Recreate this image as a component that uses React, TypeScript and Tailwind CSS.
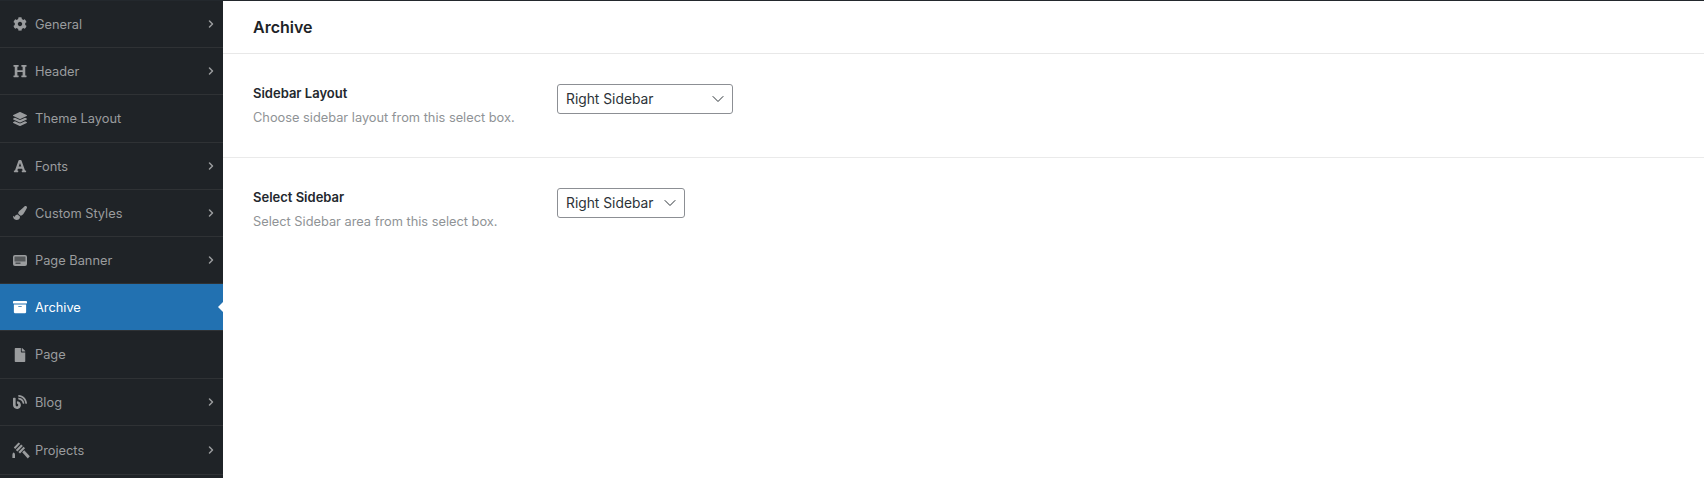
import { ChevronDown, ChevronRight } from 'lucide-react'
import type { IconType } from 'react-icons'
import { FaArchive, FaBlog, FaCog, FaFile, FaFont, FaHeading, FaLayerGroup, FaPaintBrush } from 'react-icons/fa'

function BannerIcon() {
  return (
    <svg width="14" height="11" viewBox="0 0 14 11" fill="none">
      <rect x="0" y="0" width="14" height="11" rx="2" fill="currentColor" />
      <rect x="1.5" y="1.5" width="11" height="5" rx="0.5" fill="#55585a" />
      <rect x="2.5" y="7.6" width="5" height="1.2" fill="#3a3d40" />
    </svg>
  )
}

function ProjectsIcon() {
  return (
    <svg width="18" height="17" viewBox="0 0 18 17" fill="currentColor" className="-ml-[1px]">
      <path d="M6.6 0.4 8.2 1.8 3.2 7 1.8 5.6Z" />
      <path d="M9.2 2.6 10.8 4 5.4 9.6 3.8 8.1Z" />
      <path d="M11.6 4.8 13 6.2 8 11.4 6.4 10Z" />
      <path d="M10.2 10.2 12.2 8.2 17.8 14.2 15.8 16.4Z" />
      <path d="M1.4 10.6C2.4 10.6 3 11.6 3 13L3 16 0.4 16 0.4 13C0.4 12 0.8 11.2 1.4 10.6Z" />
    </svg>
  )
}

const MENU: { label: string; icon: IconType | (() => React.JSX.Element); arrow: boolean; active?: boolean; height: string }[] = [
  { label: 'General', icon: FaCog, arrow: true, height: 'h-[47px]' },
  { label: 'Header', icon: FaHeading, arrow: true, height: 'h-[47px]' },
  { label: 'Theme Layout', icon: FaLayerGroup, arrow: false, height: 'h-[48px]' },
  { label: 'Fonts', icon: FaFont, arrow: true, height: 'h-[47px]' },
  { label: 'Custom Styles', icon: FaPaintBrush, arrow: true, height: 'h-[47px]' },
  { label: 'Page Banner', icon: BannerIcon, arrow: true, height: 'h-[47px]' },
  { label: 'Archive', icon: FaArchive, arrow: false, active: true, height: 'h-[47px]' },
  { label: 'Page', icon: FaFile, arrow: false, height: 'h-[48px]' },
  { label: 'Blog', icon: FaBlog, arrow: true, height: 'h-[47px]' },
  { label: 'Projects', icon: ProjectsIcon, arrow: true, height: 'h-[49px]' },
]

const FIELDS = [
  { title: 'Sidebar Layout', desc: 'Choose sidebar layout from this select box.', width: 'w-[176px]' },
  { title: 'Select Sidebar', desc: 'Select Sidebar area from this select box.', width: 'w-[128px]' },
]

export default function App() {
  return (
    <div className="flex h-[478px] w-[1704px] overflow-hidden border-t border-[#23282d] bg-white font-['Inter',sans-serif]">
      {/* Sidebar */}
      <div className="w-[223px] shrink-0 bg-[#1f2327]">
        {MENU.map((item) => {
          const Icon = item.icon
          return (
            <div
              key={item.label}
              className={
                item.active
                  ? `relative flex ${item.height} items-center border-b border-[#2f3235] bg-[#2271b1] pl-[13px] pr-[6px] text-white`
                  : `relative flex ${item.height} items-center border-b border-[#2f3235] pl-[13px] pr-[6px] text-[#9a9c9e]`
              }
            >
              <span className="flex w-[22px] shrink-0 items-center">
                <Icon size={14} />
              </span>
              <span className="pt-[2px] text-[12.8px] leading-none">{item.label}</span>
              {item.arrow && <ChevronRight size={12} strokeWidth={3} className="ml-auto" />}
              {item.active && (
                <span className="absolute right-0 top-1/2 -mt-[5px] h-0 w-0 border-y-[5px] border-r-[5px] border-y-transparent border-r-white" />
              )}
            </div>
          )
        })}
      </div>

      {/* Content */}
      <div className="min-w-0 flex-1">
        <div className="flex h-[53px] items-center border-b border-[#e8e8e8] px-[30px]">
          <h2 className="text-[16px] font-semibold text-[#1d2327]">Archive</h2>
        </div>
        {FIELDS.map((f) => (
          <div key={f.title} className="flex h-[104px] items-start border-b border-[#eaeaea] pl-[30px] pt-[30px] last:border-b-0">
            <div className="w-[304px] shrink-0">
              <p className="text-[13px] font-semibold leading-[18px] text-[#23282d]">{f.title}</p>
              <p className="mt-[7px] text-[12.8px] leading-[18px] text-[#8f9396]">{f.desc}</p>
            </div>
            <div className={`flex h-[30px] ${f.width} items-center justify-between rounded-[3px] border border-[#8c8f94] pl-[8px] pr-[4px] text-[13.8px] text-[#2c3338]`}>
              <span className="pt-[1px]">Right Sidebar</span>
              <ChevronDown size={20} strokeWidth={1.2} />
            </div>
          </div>
        ))}
      </div>
    </div>
  )
}
